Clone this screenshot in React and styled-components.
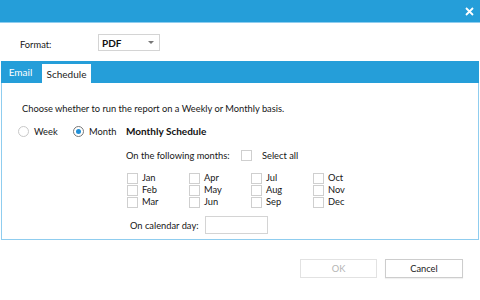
import React from "react";
import styled, { createGlobalStyle } from "styled-components";

const Global = createGlobalStyle`
  html, body { margin: 0; padding: 0; background: #fff; }
  body { font-family: Lato, "Open Sans", sans-serif; font-size: 9.3px; color: #161616; }
`;

const BLUE = "#259ed9";

const Dialog = styled.div`
  width: 480px;
  height: 300px;
  background: #fff;
  display: flex;
  flex-direction: column;
  overflow: hidden;
  white-space: nowrap;
`;

const TitleBar = styled.div`
  height: 22px;
  background: ${BLUE};
  border-bottom: 1px solid #8fcdef;
  display: flex;
  align-items: center;
  justify-content: flex-end;
  padding-right: 6px;
`;

const FormatRow = styled.div`
  display: flex;
  align-items: center;
  margin-top: 11px;
  padding-left: 20px;
  height: 17px;
`;

const Label = styled.span`
  width: 78px;
  line-height: 16px;
  padding-top: 4px;
`;

const Select = styled.div`
  width: 52px;
  height: 15px;
  border: 1px solid #d4d4d4;
  display: flex;
  align-items: center;
  justify-content: space-between;
  padding: 0 5px 0 3px;
  box-sizing: content-box;
`;

const SelectText = styled.span`
  font-weight: 700;
  font-size: 10px;
  color: #111;
`;

const Arrow = styled.span`
  width: 0;
  height: 0;
  border-left: 3px solid transparent;
  border-right: 3px solid transparent;
  border-top: 3px solid #777;
`;

const TabPanel = styled.div`
  margin: 10px 1px 0;
  display: flex;
  flex-direction: column;
`;

const TabStrip = styled.div`
  height: 22px;
  background: ${BLUE};
  display: flex;
  align-items: flex-end;
  padding-left: 4px;
`;

const Tab = styled.div`
  height: ${(p) => (p.$active ? "19px" : "22px")};
  width: ${(p) => p.$w}px;
  display: flex;
  align-items: center;
  justify-content: center;
  background: ${(p) => (p.$active ? "#fff" : "transparent")};
  color: ${(p) => (p.$active ? "#222" : "#fff")};
  font-size: 10px;
  margin-right: ${(p) => (p.$active ? "0" : "6px")};
`;

const Body = styled.div`
  border: 1px solid #8fcdef;
  border-top: none;
  height: 157px;
  padding: 18px 0 0 20px;
  box-sizing: border-box;
`;

const Line = styled.div`
  line-height: 16px;
`;

const RadioRow = styled.div`
  display: flex;
  align-items: center;
  margin-top: 6px;
  height: 16px;
  margin-left: -4px;
`;

const RadioOption = styled.label`
  display: flex;
  align-items: center;
  gap: 5px;
  width: ${(p) => p.$w}px;
`;

const Radio = styled.span`
  width: 9px;
  height: 9px;
  border-radius: 50%;
  border: 1px solid ${(p) => (p.$on ? "#777" : "#c8c8c8")};
  display: flex;
  align-items: center;
  justify-content: center;
  &::after {
    content: "";
    width: 5px;
    height: 5px;
    border-radius: 50%;
    background: ${(p) => (p.$on ? "#1f8fd8" : "transparent")};
  }
`;

const Bold = styled.span`
  font-weight: 700;
  font-size: 10px;
  color: #111;
`;

const Schedule = styled.div`
  margin-left: 104px;
  margin-top: 8px;
`;

const SelectRow = styled.div`
  display: flex;
  align-items: center;
  height: 16px;
`;

const RowLabel = styled.span`
  width: ${(p) => p.$w}px;
  flex: none;
`;

const Box = styled.span`
  width: 9px;
  height: 9px;
  border: 1px solid #cfcfcf;
  background: #fff;
  flex: none;
`;

const SelectAllBox = styled(Box)`
  margin-right: 10px;
`;

const MonthGrid = styled.div`
  display: grid;
  grid-template-columns: repeat(4, 62px);
  grid-auto-flow: column;
  grid-template-rows: repeat(3, 12px);
  margin-top: 9px;
  margin-left: 1px;
`;

const Month = styled.label`
  display: flex;
  align-items: center;
  gap: 4px;
  line-height: 12px;
`;

const DayRow = styled.div`
  display: flex;
  align-items: center;
  margin-top: 8px;
  margin-left: 4px;
`;

const DayInput = styled.div`
  width: 61px;
  height: 16px;
  border: 1px solid #d4d4d4;
`;

const Footer = styled.div`
  display: flex;
  justify-content: flex-end;
  gap: 8px;
  padding-right: 17px;
  margin-top: 19px;
`;

const Button = styled.div`
  width: ${(p) => p.$w}px;
  height: 17px;
  border: 1px solid ${(p) => (p.$disabled ? "#e2e2e2" : "#cdcdcd")};
  display: flex;
  align-items: center;
  justify-content: center;
  color: ${(p) => (p.$disabled ? "#b5b5b5" : "#222")};
  box-shadow: ${(p) => (p.$disabled ? "none" : "0 1px 1px rgba(0,0,0,0.06)")};
`;

const months = ["Jan", "Feb", "Mar", "Apr", "May", "Jun", "Jul", "Aug", "Sep", "Oct", "Nov", "Dec"];

export default function App() {
  return (
    <>
      <Global />
      <Dialog>
        <TitleBar>
          <svg width="9" height="9" viewBox="0 0 9 9">
            <path d="M1 1 L8 8 M8 1 L1 8" stroke="#fff" strokeWidth="1.8" />
          </svg>
        </TitleBar>
        <FormatRow>
          <Label>Format:</Label>
          <Select>
            <SelectText>PDF</SelectText>
            <Arrow />
          </Select>
        </FormatRow>
        <TabPanel>
          <TabStrip>
            <Tab $w={31}>Email</Tab>
            <Tab $w={49} $active>Schedule</Tab>
          </TabStrip>
          <Body>
            <Line>Choose whether to run the report on a Weekly or Monthly basis.</Line>
            <RadioRow>
              <RadioOption $w={55}>
                <Radio />
                Week
              </RadioOption>
              <RadioOption $w={53}>
                <Radio $on />
                Month
              </RadioOption>
              <Bold>Monthly Schedule</Bold>
            </RadioRow>
            <Schedule>
              <SelectRow>
                <RowLabel $w={115}>On the following months:</RowLabel>
                <SelectAllBox />
                Select all
              </SelectRow>
              <MonthGrid>
                {months.map((m) => (
                  <Month key={m}>
                    <Box />
                    {m}
                  </Month>
                ))}
              </MonthGrid>
              <DayRow>
                <RowLabel $w={75}>On calendar day:</RowLabel>
                <DayInput />
              </DayRow>
            </Schedule>
          </Body>
        </TabPanel>
        <Footer>
          <Button $w={75} $disabled>OK</Button>
          <Button $w={76}>Cancel</Button>
        </Footer>
      </Dialog>
    </>
  );
}
